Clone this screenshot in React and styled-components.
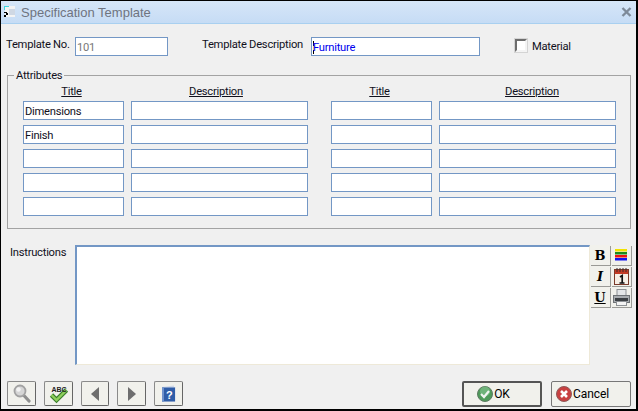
import React from "react";
import styled, { createGlobalStyle } from "styled-components";

const Global = createGlobalStyle`
  html, body { margin: 0; padding: 0; background: #000; }
  * { box-sizing: border-box; }
  svg text { letter-spacing: 0; }
`;

const Win = styled.div`
  width: 638px;
  height: 411px;
  border: 1px solid #000;
  border-right-width: 2px;
  border-bottom-width: 2px;
  background: #f0f0f0;
  display: flex;
  flex-direction: column;
  font-family: Roboto, "Liberation Sans", sans-serif;
  font-size: 11.2px;
  letter-spacing: -0.25px;
  color: #10101c;
  overflow: hidden;
`;
const TitleBar = styled.div`
  height: 23px;
  flex-shrink: 0;
  display: flex;
  align-items: center;
  padding: 0 4px 0 2px;
  gap: 4px;
  background: linear-gradient(180deg, #d6e6f8 0%, #c6dcf5 100%);
  border-bottom: 1px solid #a9d0f0;
`;
const TitleText = styled.div`
  flex: 1;
  font-family: "Liberation Sans", sans-serif;
  font-size: 13px;
  letter-spacing: 0;
  color: #6f7480;
`;
const Body = styled.div`
  flex: 1;
  display: flex;
  flex-direction: column;
  padding: 13px 5px 0 5px;
`;
const TopRow = styled.div`
  display: flex;
  align-items: flex-start;
  height: 32px;
`;
const Label = styled.label`
  line-height: 15px;
  white-space: nowrap;
  width: ${(p) => p.$w}px;
  margin-left: ${(p) => p.$ml || 0}px;
  padding-top: ${(p) => p.$pt || 0}px;
`;
const Field = styled.div`
  width: ${(p) => p.$w}px;
  height: 19px;
  background: #fff;
  border: 1px solid #7397c5;
  color: ${(p) => p.$color || "#10101c"};
  line-height: 19px;
  padding-left: 1px;
  flex-shrink: 0;
  white-space: nowrap;
  overflow: hidden;
`;
const Caret = styled.span`
  display: inline-block;
  width: 1px;
  height: 13px;
  background: linear-gradient(180deg, #000 0 40%, #e6d800 40% 70%, #000 70%);
  vertical-align: -3px;
  margin-right: -1px;
`;
const CheckBox = styled.span`
  width: 12px;
  height: 13px;
  margin: 2px 5px 0 35px;
  background: #fff;
  border: 2px solid;
  border-color: #6d6d6d #f4f4f4 #f4f4f4 #6d6d6d;
  box-shadow: 0 0 0 1px #d4d4d4;
  flex-shrink: 0;
`;
const Group = styled.fieldset`
  margin: 0 0 0 1px;
  padding: 0 14px 0 15px;
  width: 624px;
  height: 160px;
  border: 1px solid #a3a3a3;
  min-inline-size: 0;
`;
const Legend = styled.legend`
  padding: 0 2px;
  margin-left: -9px;
  line-height: 13px;
`;
const AttrColumnsRow = styled.div`
  display: flex;
  gap: 23px;
`;
const AttrSide = styled.div`
  display: grid;
  grid-template-columns: 101px 177px;
  column-gap: 7px;
  row-gap: 5px;
  margin-top: 3px;
`;
const ColHead = styled.div`
  text-align: center;
  text-decoration: underline;
  line-height: 13px;
  margin-bottom: -2px;
  padding-left: ${(p) => p.$pl || 0}px;
  padding-right: ${(p) => p.$pr || 0}px;
`;
const InstrRow = styled.div`
  display: flex;
  align-items: flex-start;
  margin-top: 16px;
`;
const InstrBox = styled.div`
  width: 515px;
  height: 120px;
  background: #fff;
  border-top: 2px solid #7397c5;
  border-left: 2px solid #7397c5;
  border-bottom: 1px solid #eee9d8;
  border-right: 1px solid #eee9d8;
  flex-shrink: 0;
`;
const Tools = styled.div`
  display: grid;
  grid-template-columns: 20px 20px;
  grid-auto-rows: 20px;
  gap: 1px;
`;
const ToolBtn = styled.div`
  background: #f1f1ec;
  box-shadow: 1px 1px 0 #9a9a96;
  display: flex;
  align-items: center;
  justify-content: center;
  font-family: "DejaVu Serif", serif;
  font-size: 13px;
  font-weight: 700;
  letter-spacing: 0;
  font-style: ${(p) => (p.$italic ? "italic" : "normal")};
  text-decoration: ${(p) => (p.$under ? "underline" : "none")};
  color: #000;
`;
const Footer = styled.div`
  display: flex;
  align-items: flex-start;
  margin-top: 16px;
  padding-left: 1px;
`;
const SmallBtn = styled.div`
  width: ${(p) => p.$w || 29}px;
  height: 25px;
  margin-right: 8px;
  background: #f1f1ec;
  border: 1px solid #8a8a8a;
  border-right-color: #666;
  border-bottom-color: #666;
  border-radius: 2px;
  display: flex;
  align-items: center;
  justify-content: center;
`;
const Spacer = styled.div`
  flex: 1;
`;
const BigBtn = styled.div`
  width: 80px;
  height: 26px;
  margin-left: ${(p) => p.$ml || 0}px;
  padding-right: 17px;
  background: #f1f1ec;
  border: ${(p) => (p.$def ? "2px solid #555" : "1px solid #777")};
  border-radius: 2px;
  display: flex;
  align-items: center;
  justify-content: center;
  gap: 1px;
  font-size: 12px;
  letter-spacing: -0.1px;
  color: #000;
`;

const rows = ["Dimensions", "Finish", "", "", ""];

const AppIcon = () => (
  <svg width="14" height="14" viewBox="0 0 14 14">
    <rect x="2" y="1" width="10" height="11" fill="#f4f4f4" />
    <rect x="1" y="1" width="5" height="1" fill="#3fd8e0" />
    <rect x="1" y="2" width="1" height="3" fill="#3fd8e0" />
    <rect x="6" y="4" width="6" height="6" fill="#cfd8e4" />
    <rect x="1" y="7" width="3" height="1" fill="#000" />
    <rect x="3" y="8" width="2" height="2" fill="#000" />
    <rect x="1" y="10" width="2" height="2" fill="#000" />
  </svg>
);
const CloseX = () => (
  <svg width="11" height="10" viewBox="0 0 11 10">
    <path d="M1.5 1 L9.5 9 M9.5 1 L1.5 9" stroke="#7e8a99" strokeWidth="2.4" />
  </svg>
);
const ColorLines = () => (
  <svg width="12" height="12" viewBox="0 0 12 12">
    <rect y="0" width="12" height="2.5" fill="#f2e200" />
    <rect y="3" width="12" height="2.5" fill="#1c8a1c" />
    <rect y="6" width="12" height="2.5" fill="#ee1010" />
    <rect y="9" width="12" height="2.5" fill="#1010ee" />
  </svg>
);
const CalendarIcon = () => (
  <svg width="15" height="17" viewBox="0 0 15 17">
    <rect x="0.5" y="1.5" width="14" height="15" fill="#f6efe6" stroke="#7a3a2a" />
    <rect x="1" y="2" width="13" height="4" fill="#c43a24" />
    <path d="M3 0v4M6 0v4M9 0v4M12 0v4" stroke="#3a2a2a" strokeWidth="1" />
    <path d="M6 9l2.2-1.5v7.5M5.5 15h5" stroke="#111" strokeWidth="1.7" fill="none" />
  </svg>
);
const PrinterIcon = () => (
  <svg width="17" height="17" viewBox="0 0 17 17">
    <rect x="4" y="0.5" width="9" height="6" fill="#e4e6e8" stroke="#8e9296" />
    <rect x="0.5" y="6.5" width="16" height="7" fill="#a8acb0" stroke="#6e7276" />
    <rect x="2" y="9" width="13" height="3" fill="#3c4044" />
    <rect x="3.5" y="12.5" width="10" height="4" fill="#f4f4f4" stroke="#8e9296" />
  </svg>
);
const Magnifier = () => (
  <svg width="18" height="19" viewBox="0 0 18 19">
    <path d="M10 10.5 L16 17" stroke="#8e8e8e" strokeWidth="3.2" strokeLinecap="round" />
    <circle cx="7" cy="7" r="5.5" fill="#d6d6d6" stroke="#a2a2a2" strokeWidth="1.8" />
    <circle cx="5.5" cy="5.5" r="2.2" fill="#f4f4f4" />
  </svg>
);
const SpellIcon = () => (
  <svg width="20" height="20" viewBox="0 0 20 20">
    <path d="M2.5 11 L7.5 16 L17.5 6" stroke="#3c7f2c" strokeWidth="4.6" fill="none" />
    <path d="M2.5 11 L7.5 16 L17.5 6" stroke="#8fd05c" strokeWidth="2.4" fill="none" />
    <text x="2.5" y="8" fontFamily="Liberation Sans" fontSize="7" fontWeight="700" fill="#222">ABC</text>
  </svg>
);
const Arrow = ({ dir }) => (
  <svg width="9" height="14" viewBox="0 0 9 14">
    <path d={dir === "l" ? "M8 0 V14 L0 7 Z" : "M1 0 V14 L9 7 Z"} fill="#6e6e6e" />
  </svg>
);
const HelpIcon = () => (
  <svg width="15" height="17" viewBox="0 0 15 17">
    <path d="M1 2 L13 0.5 V2 H14.5 V16.5 H1 Z" fill="#cfd8e8" />
    <rect x="1" y="2.5" width="13" height="14" fill="#2f5da8" />
    <rect x="1" y="2.5" width="2" height="14" fill="#6f92cc" />
    <text x="5" y="14" fontFamily="Liberation Sans" fontSize="11" fontWeight="700" fill="#fff">?</text>
  </svg>
);
const OkIcon = () => (
  <svg width="16" height="16" viewBox="0 0 16 16">
    <circle cx="8" cy="8" r="7.5" fill="#4f9a5a" stroke="#5e7a62" />
    <circle cx="8" cy="5.5" r="5" fill="#86c490" opacity="0.6" />
    <path d="M4 8 L7 11 L12 5" stroke="#f0f4f0" strokeWidth="2.2" fill="none" />
  </svg>
);
const CancelIcon = () => (
  <svg width="16" height="16" viewBox="0 0 16 16">
    <circle cx="8" cy="8" r="7.5" fill="#c84040" stroke="#8e5a5a" />
    <path d="M5 5 L11 11 M11 5 L5 11" stroke="#fff" strokeWidth="2.6" />
  </svg>
);

const AttrColumns = ({ values, descLeft, descRight }) => (
  <AttrSide>
    <ColHead $pr={4}>Title</ColHead>
    <ColHead $pl={descLeft} $pr={descRight}>Description</ColHead>
    {values.map((v, i) => (
      <React.Fragment key={i}>
        <Field $w={101}>{v}</Field>
        <Field $w={177}></Field>
      </React.Fragment>
    ))}
  </AttrSide>
);

export default function App() {
  return (
    <>
      <Global />
      <Win>
        <TitleBar>
          <AppIcon />
          <TitleText>Specification Template</TitleText>
          <CloseX />
        </TitleBar>
        <Body>
          <TopRow>
            <Label $w={69}>Template No.</Label>
            <Field $w={93} $color="#777">101</Field>
            <Label $w={109} $ml={34}>Template Description</Label>
            <Field $w={169} $color="#0000ee"><Caret />Furniture</Field>
            <CheckBox />
            <Label $pt={2}>Material</Label>
          </TopRow>
          <Group>
            <Legend>Attributes</Legend>
            <AttrColumnsRow>
              <AttrColumns values={rows} descRight={7} />
              <AttrColumns values={["", "", "", "", ""]} descLeft={9} />
            </AttrColumnsRow>
          </Group>
          <InstrRow>
            <Label $w={65} $ml={4}>Instructions</Label>
            <InstrBox />
            <Tools>
              <ToolBtn>B</ToolBtn>
              <ToolBtn><ColorLines /></ToolBtn>
              <ToolBtn $italic>I</ToolBtn>
              <ToolBtn><CalendarIcon /></ToolBtn>
              <ToolBtn $under>U</ToolBtn>
              <ToolBtn><PrinterIcon /></ToolBtn>
            </Tools>
          </InstrRow>
          <Footer>
            <SmallBtn><Magnifier /></SmallBtn>
            <SmallBtn><SpellIcon /></SmallBtn>
            <SmallBtn $w={28}><Arrow dir="l" /></SmallBtn>
            <SmallBtn $w={29}><Arrow dir="r" /></SmallBtn>
            <SmallBtn><HelpIcon /></SmallBtn>
            <Spacer />
            <BigBtn $def><OkIcon />OK</BigBtn>
            <BigBtn $ml={9}><CancelIcon />Cancel</BigBtn>
          </Footer>
        </Body>
      </Win>
    </>
  );
}
